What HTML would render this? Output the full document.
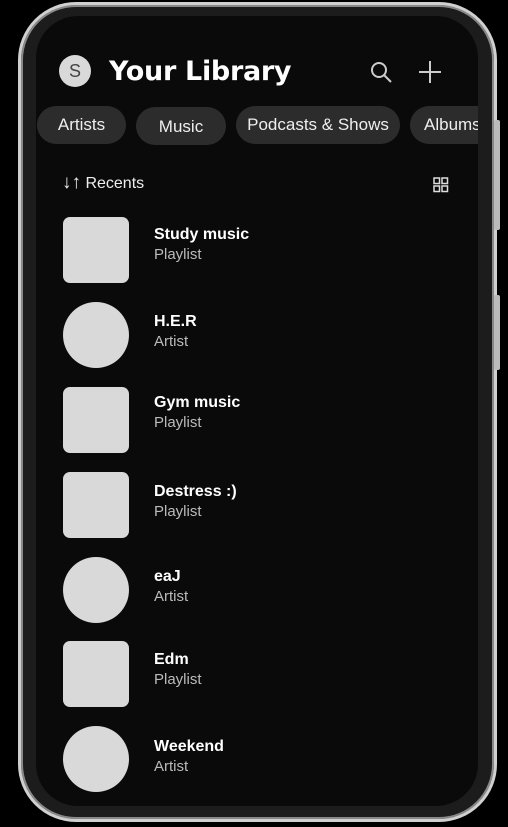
<!DOCTYPE html><html><head><style>
body{margin:0;width:508px;height:827px;background:#000;overflow:hidden;font-family:"Liberation Sans",sans-serif;position:relative}
.frame{position:absolute;left:18px;top:2px;width:473px;height:814px;border:3px solid #d0d0d0;border-radius:58px;background:#1c1c1c;box-shadow:inset 0 0 0 2px #888}
.btn{position:absolute;left:494px;width:6px;background:#bbb;border-radius:2px}
.screen{position:absolute;left:36px;top:16px;width:442px;height:790px;background:#0a0a0a;border-radius:42px;overflow:hidden}
.a{position:absolute}
.chip{position:absolute;height:38px;border-radius:19px;background:#2c2c2c;color:#eee;font-size:17px;line-height:38px;text-align:center;white-space:nowrap}
.art{position:absolute;left:27px;width:66px;height:66px;background:#d9d9d9;border-radius:7px}
.circ{border-radius:50%}
.t{position:absolute;left:118px;color:#fff;font-weight:bold;font-size:16px}
.s{position:absolute;left:118px;color:#bbb;font-size:15px}
</style></head><body>
<div class="frame"></div>
<div class="btn" style="top:120px;height:110px"></div>
<div class="btn" style="top:295px;height:75px"></div>
<div class="screen">
<div class="a" style="left:23px;top:39px;width:32px;height:32px;border-radius:50%;background:#d9d9d9;color:#444;font-size:18px;line-height:32px;text-align:center">S</div>
<div class="a" style="left:73px;top:40px;color:#fff;font-weight:900;font-size:27px;letter-spacing:-0.3px;font-family:'DejaVu Sans',sans-serif">Your Library</div>
<svg class="a" style="left:333px;top:44px" width="26" height="26" viewBox="0 0 26 26"><circle cx="10" cy="10" r="7" stroke="#ccc" stroke-width="2" fill="none"/><line x1="15" y1="15" x2="22" y2="22" stroke="#ccc" stroke-width="2"/></svg>
<svg class="a" style="left:381px;top:43px" width="26" height="26"><line x1="13" y1="2" x2="13" y2="24" stroke="#ccc" stroke-width="2"/><line x1="2" y1="13" x2="24" y2="13" stroke="#ccc" stroke-width="2"/></svg>
<div class="chip" style="left:1px;top:90px;width:89px">Artists</div>
<div class="chip" style="left:100px;top:91px;width:90px;line-height:40px">Music</div>
<div class="chip" style="left:200px;top:90px;width:164px">Podcasts &amp; Shows</div>
<div class="chip" style="left:374px;top:90px;width:100px;text-align:left;padding-left:14px">Albums</div>
<div class="a" style="left:26px;top:156px;color:#eee;font-size:16px"><span style="font-size:19px">↓↑</span> Recents</div>
<svg class="a" style="left:397px;top:161px" width="16" height="16"><g fill="none" stroke="#ddd" stroke-width="1.5"><rect x="1" y="1" width="5.5" height="5.5"/><rect x="9" y="1" width="5.5" height="5.5"/><rect x="1" y="9" width="5.5" height="5.5"/><rect x="9" y="9" width="5.5" height="5.5"/></g></svg>
<div class="art" style="top:201px"></div><div class="t" style="top:210px">Study music</div><div class="s" style="top:230px">Playlist</div>
<div class="art circ" style="top:286px"></div><div class="t" style="top:297px">H.E.R</div><div class="s" style="top:317px">Artist</div>
<div class="art" style="top:371px"></div><div class="t" style="top:378px">Gym music</div><div class="s" style="top:398px">Playlist</div>
<div class="art" style="top:456px"></div><div class="t" style="top:467px">Destress :)</div><div class="s" style="top:487px">Playlist</div>
<div class="art circ" style="top:541px"></div><div class="t" style="top:552px">eaJ</div><div class="s" style="top:572px">Artist</div>
<div class="art" style="top:625px"></div><div class="t" style="top:635px">Edm</div><div class="s" style="top:655px">Playlist</div>
<div class="art circ" style="top:710px"></div><div class="t" style="top:722px">Weekend</div><div class="s" style="top:742px">Artist</div>
</div>
</body></html>
